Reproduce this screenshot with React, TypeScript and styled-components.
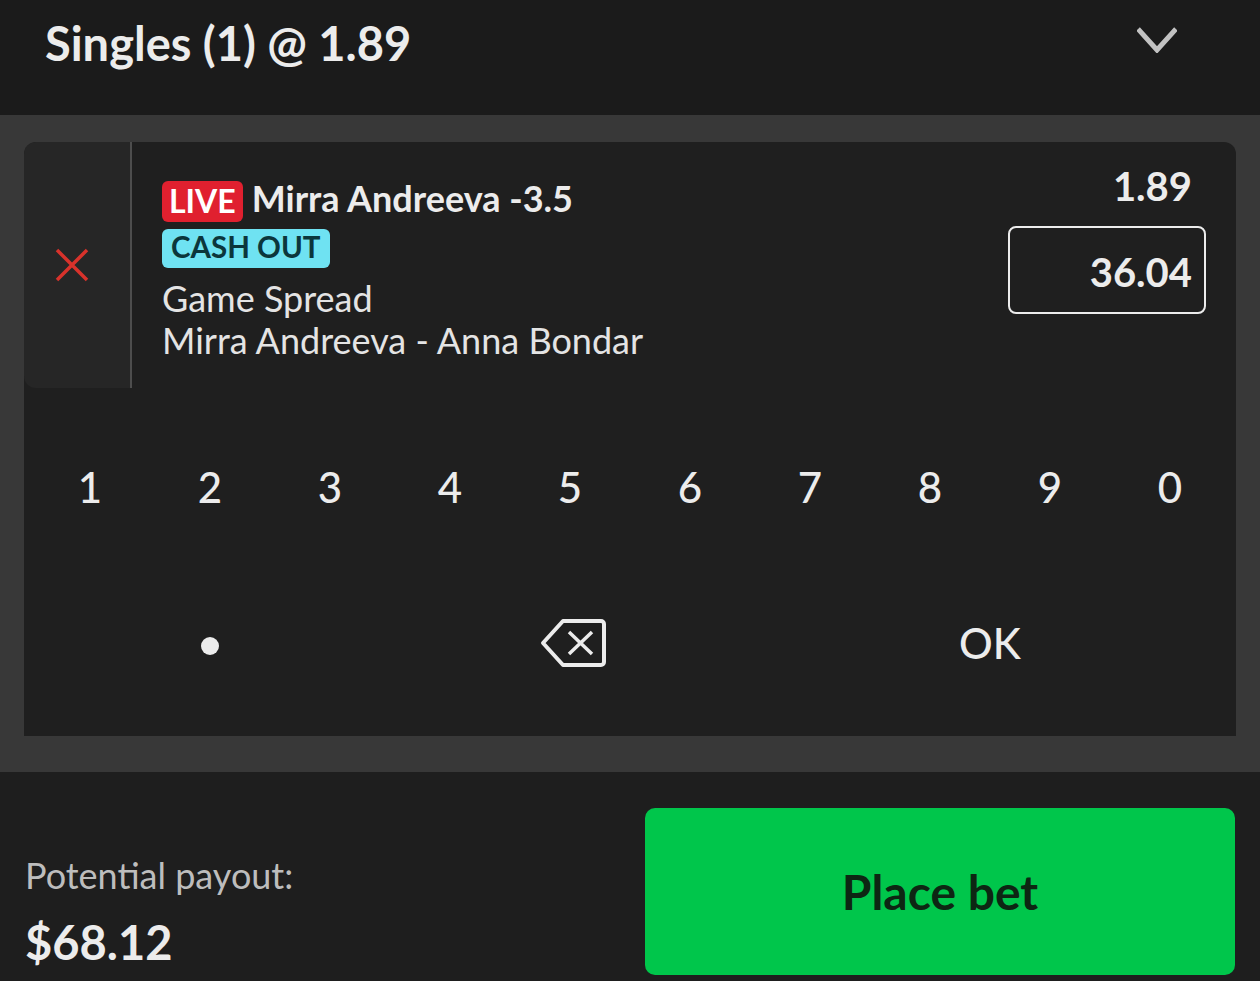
import React from 'react';
import styled, { createGlobalStyle } from 'styled-components';

const GlobalStyle = createGlobalStyle`
  html, body {
    margin: 0;
    padding: 0;
    background: #2b2b2b;
  }
  body {
    font-family: Lato, "Liberation Sans", sans-serif;
    color: #ececec;
  }
`;

const digits = ['1', '2', '3', '4', '5', '6', '7', '8', '9', '0'];

const Chevron = () => (
  <svg width="40" height="26" viewBox="0 0 40 26">
    <polyline
      points="1,2 20,23 39,2"
      fill="none"
      stroke="#c2c2c2"
      strokeWidth="5"
    />
  </svg>
);

const RemoveIcon = () => (
  <svg width="34" height="34" viewBox="0 0 34 34">
    <path
      d="M2 2 L32 32 M32 2 L2 32"
      stroke="#d8322b"
      strokeWidth="3.5"
      fill="none"
    />
  </svg>
);

const BackspaceIcon = () => (
  <svg width="68" height="52" viewBox="0 0 68 52">
    <path
      d="M23 4 H61 a3 3 0 0 1 3 3 V45 a3 3 0 0 1 -3 3 H23 L3 26 Z"
      fill="none"
      stroke="#ececec"
      strokeWidth="4"
      strokeLinejoin="round"
    />
    <path
      d="M29 15 L52 37 M52 15 L29 37"
      stroke="#ececec"
      strokeWidth="3.5"
      fill="none"
    />
  </svg>
);

export default function App() {
  return (
    <Page>
      <GlobalStyle />
      <Header>
        <Title>Singles (1) @ 1.89</Title>
        <Chevron />
      </Header>
      <SlipArea>
        <Card>
          <SelectionRow>
            <RemoveCell>
              <RemoveIcon />
            </RemoveCell>
            <Details>
              <SelectionLine>
                <Badge kind="live">LIVE</Badge>
                <SelectionName>Mirra Andreeva -3.5</SelectionName>
              </SelectionLine>
              <Badge kind="cashout">CASH OUT</Badge>
              <MarketText>
                Game Spread
                <br />
                Mirra Andreeva - Anna Bondar
              </MarketText>
            </Details>
            <OddsColumn>
              <Odds>1.89</Odds>
              <StakeBox>36.04</StakeBox>
            </OddsColumn>
          </SelectionRow>
          <Keypad>
            {digits.map((d) => (
              <Key key={d}>{d}</Key>
            ))}
            <Key span={3}>
              <Dot />
            </Key>
            <Key span={3} shift={7}>
              <BackspaceIcon />
            </Key>
            <Key span={4}>OK</Key>
          </Keypad>
        </Card>
      </SlipArea>
      <Footer>
        <Payout>
          <PayoutLabel>Potential payout:</PayoutLabel>
          <PayoutAmount>$68.12</PayoutAmount>
        </Payout>
        <PlaceBet>Place bet</PlaceBet>
      </Footer>
    </Page>
  );
}

const Page = styled.div`
  width: 1260px;
  height: 981px;
  overflow: hidden;
  display: flex;
  flex-direction: column;
  background: #1e1e1e;
`;

const Header = styled.div`
  height: 115px;
  box-sizing: border-box;
  padding: 15px 83px 0 45px;
  display: flex;
  justify-content: space-between;
  align-items: flex-start;
  background: #1b1b1b;

  svg {
    margin-top: 12px;
  }
`;

const Title = styled.div`
  font-size: 47px;
  line-height: 56px;
  font-weight: 700;
  color: #ececec;
`;

const SlipArea = styled.div`
  background: #383838;
  padding: 27px 24px 36px;
`;

const Card = styled.div`
  background: #1f1f1f;
  border-radius: 12px 12px 0 0;
  overflow: hidden;
`;

const SelectionRow = styled.div`
  height: 246px;
  display: flex;
`;

const RemoveCell = styled.div`
  width: 108px;
  box-sizing: border-box;
  background: #262626;
  border-right: 2px solid #4d4d4d;
  border-radius: 12px 0 0 12px;
  display: flex;
  align-items: center;
  justify-content: center;
  padding-right: 10px;
`;

const Details = styled.div`
  flex: 1;
  padding: 39px 0 0 30px;
  display: flex;
  flex-direction: column;
  align-items: flex-start;
`;

const SelectionLine = styled.div`
  display: flex;
  align-items: flex-start;
  gap: 9px;
  margin-bottom: 7px;
`;

const Badge = styled.span<{ kind: 'live' | 'cashout' }>`
  display: inline-block;
  font-weight: 700;
  border-radius: 6px;
  ${({ kind }) =>
    kind === 'live'
      ? `
    background: #e0202f;
    color: #ffffff;
    font-size: 32px;
    line-height: 39px;
    padding: 0 7px 2px;
  `
      : `
    background: #6fe2f2;
    color: #0b363c;
    font-size: 29.5px;
    line-height: 35px;
    padding: 0 9px 4px;
  `}
`;

const SelectionName = styled.span`
  font-size: 36px;
  line-height: 35px;
  font-weight: 700;
  color: #ececec;
`;

const MarketText = styled.div`
  margin-top: 9px;
  font-size: 36px;
  line-height: 42px;
  color: #e4e4e4;
`;

const OddsColumn = styled.div`
  padding: 22px 30px 0 0;
  display: flex;
  flex-direction: column;
  align-items: flex-end;
`;

const Odds = styled.div`
  font-size: 40px;
  line-height: 44px;
  font-weight: 700;
  color: #ececec;
  margin: 0 14px 18px 0;
`;

const StakeBox = styled.div`
  width: 198px;
  height: 88px;
  box-sizing: border-box;
  border: 2px solid #ececec;
  border-radius: 8px;
  padding: 4px 12px 0 0;
  text-align: right;
  font-size: 40px;
  line-height: 80px;
  font-weight: 700;
  color: #ececec;
`;

const Keypad = styled.div`
  display: grid;
  grid-template-columns: repeat(10, 1fr);
  grid-auto-rows: 156px;
  padding: 21px 6px 15px;
`;

const Key = styled.div<{ span?: number; shift?: number }>`
  grid-column: span ${({ span }) => span ?? 1};
  display: flex;
  align-items: center;
  justify-content: center;
  padding-left: ${({ shift }) => shift ?? 0}px;
  font-size: 42px;
  font-weight: 500;
  color: #ececec;
`;

const Dot = styled.span`
  width: 18px;
  height: 18px;
  border-radius: 50%;
  background: #ececec;
  margin-top: 6px;
`;

const Footer = styled.div`
  flex: 1;
  display: flex;
  justify-content: space-between;
  align-items: flex-start;
  padding: 36px 25px 6px;
`;

const Payout = styled.div`
  padding-top: 46px;
  display: flex;
  flex-direction: column;
`;

const PayoutLabel = styled.div`
  font-size: 36px;
  line-height: 42px;
  color: #bdbdbd;
  margin-bottom: 18px;
`;

const PayoutAmount = styled.div`
  font-size: 47px;
  line-height: 56px;
  font-weight: 700;
  color: #ececec;
`;

const PlaceBet = styled.button`
  width: 590px;
  height: 167px;
  border: none;
  border-radius: 10px;
  background: #00c64b;
  color: #0d2613;
  font-family: Lato, "Liberation Sans", sans-serif;
  font-size: 48px;
  font-weight: 700;
  cursor: pointer;
`;
